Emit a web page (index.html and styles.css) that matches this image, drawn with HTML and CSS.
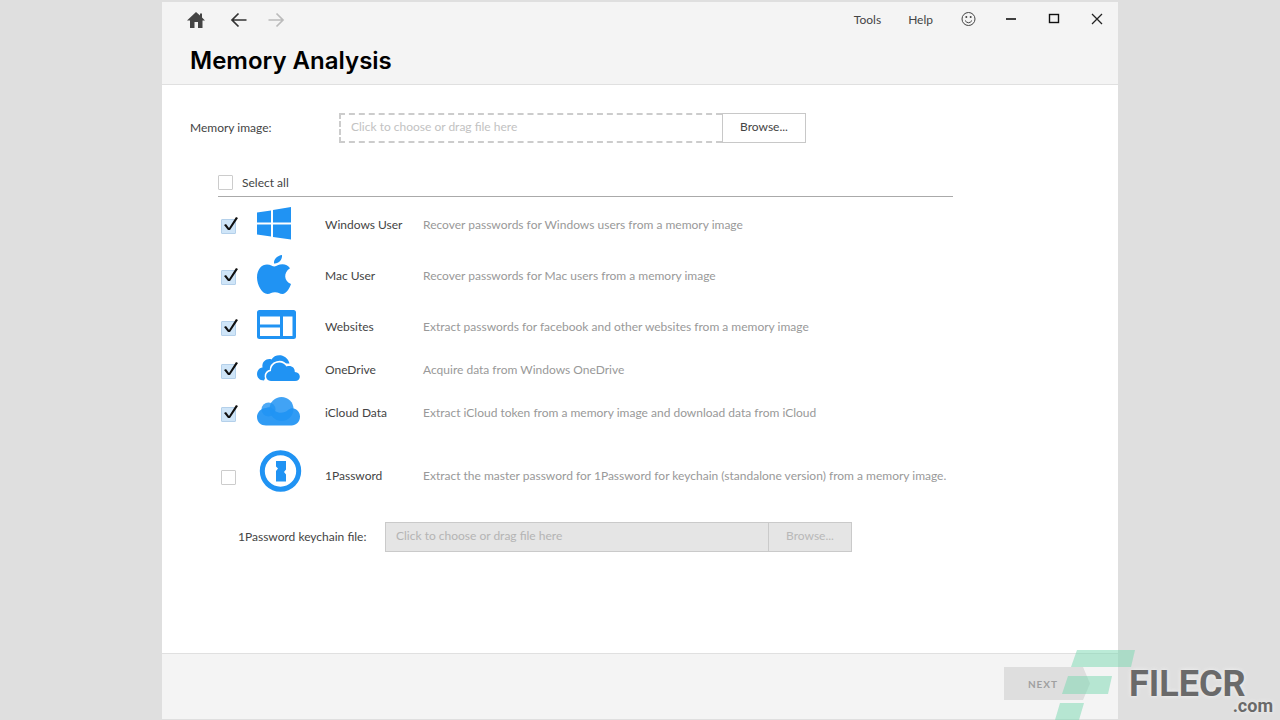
FILE: index.html
```html
<!DOCTYPE html>
<html lang="en">

<head>
    <meta charset="UTF-8">
    <meta name="viewport" content="width=device-width, initial-scale=1.0">
    <title>Memory Analysis</title>
    <link rel="stylesheet" href="styles.css">
</head>

<body>
    <div class="window">
        <header class="header">
            <div class="toolbar">
                <nav class="nav">
                    <button class="icon-btn home" aria-label="Home">
                        <svg width="18" height="18" viewBox="0 0 18 18"><path d="M9 1 L13 4.500 V2.500 H15 V6.500 L18 9.500 H15.500 V17 H11 V11 H7.500 V17 H3 V9.500 H0 Z" fill="#444"/></svg>
                    </button>
                    <button class="icon-btn" aria-label="Back">
                        <svg width="18" height="18" viewBox="0 0 18 18"><path d="M16.500 9 H2 M8.500 2.500 L2 9 L8.500 15.500" fill="none" stroke="#333" stroke-width="1.700"/></svg>
                    </button>
                    <button class="icon-btn" aria-label="Forward" disabled>
                        <svg width="18" height="18" viewBox="0 0 18 18"><path d="M1.500 9 H16 M9.500 2.500 L16 9 L9.500 15.500" fill="none" stroke="#bbb" stroke-width="1.700"/></svg>
                    </button>
                </nav>
                <div class="menu">
                    <button class="menu-btn">Tools</button>
                    <button class="menu-btn">Help</button>
                    <button class="icon-btn" aria-label="Feedback">
                        <svg width="16" height="16" viewBox="0 0 16 16" fill="none" stroke="#444" stroke-width="1"><circle cx="8.500" cy="7" r="6.500"/><path d="M5 8.500 Q8.500 13 12 8.500"/><circle cx="6.300" cy="5" r="1" fill="#444" stroke="none"/><circle cx="10.700" cy="5" r="1" fill="#444" stroke="none"/></svg>
                    </button>
                    <button class="icon-btn" aria-label="Minimize">
                        <svg width="16" height="16" viewBox="0 0 16 16"><path d="M3 7 H13" stroke="#111" stroke-width="1.600"/></svg>
                    </button>
                    <button class="icon-btn" aria-label="Maximize">
                        <svg width="16" height="16" viewBox="0 0 16 16"><rect x="3.500" y="2.500" width="9" height="8" fill="none" stroke="#111" stroke-width="1.400"/></svg>
                    </button>
                    <button class="icon-btn" aria-label="Close">
                        <svg width="16" height="16" viewBox="0 0 16 16"><path d="M3 2 L13 12 M13 2 L3 12" stroke="#222" stroke-width="1.300"/></svg>
                    </button>
                </div>
            </div>
            <h1>Memory Analysis</h1>
        </header>

        <main class="content">
            <div class="file-row">
                <label for="memory-image">Memory image:</label>
                <div class="file-picker">
                    <input type="text" id="memory-image" placeholder="Click to choose or drag file here">
                    <button>Browse...</button>
                </div>
            </div>

            <div class="options">
                <div class="select-all">
                    <input type="checkbox" class="check" id="select-all">
                    <label for="select-all">Select all</label>
                </div>

                <div class="option">
                    <input type="checkbox" class="check" id="windows" checked>
                    <svg class="option-icon" viewBox="0 0 44 44"><path d="M0 9.500 L14 7.500 V19.500 H0 Z M16 7 L34 4 V19.500 H16 Z M0 21.500 H14 V33.500 L0 31.500 Z M16 21.500 H34 V36.500 L16 34 Z"/></svg>
                    <label for="windows">Windows User</label>
                    <p>Recover passwords for Windows users from a memory image</p>
                </div>
                <div class="option spaced">
                    <input type="checkbox" class="check" id="mac" checked>
                    <svg class="option-icon" viewBox="0 0 44 44"><path d="M25 1 C25.500 6 21.500 10 17 9.500 C16.500 5 20.500 1.500 25 1 Z M17.500 12.500 C19.500 12.500 21.500 10.300 25.500 10.300 C28.500 10.300 31.300 11.800 33 14.300 C26 18.500 27 27.500 34 30 C32.500 34.500 29 40 25.500 40 C22.500 40 21.500 38.300 18 38.300 C14.500 38.300 13.500 40 10.500 40 C5 40 0 31 0 23.500 C0 15 5 10.500 10 10.500 C13.500 10.500 15.500 12.500 17.500 12.500 Z"/></svg>
                    <label for="mac">Mac User</label>
                    <p>Recover passwords for Mac users from a memory image</p>
                </div>
                <div class="option spaced">
                    <input type="checkbox" class="check" id="websites" checked>
                    <svg class="option-icon" viewBox="0 0 44 44"><path fill-rule="evenodd" d="M2.500 5 H36.500 Q39 5 39 7.500 V31.500 Q39 34 36.500 34 H2.500 Q0 34 0 31.500 V7.500 Q0 5 2.500 5 Z M3 11.500 V19.500 H23 V11.500 Z M26 11.500 V31 H35.500 V11.500 Z M3 22.500 V31 H23 V22.500 Z"/></svg>
                    <label for="websites">Websites</label>
                    <p>Extract passwords for facebook and other websites from a memory image</p>
                </div>
                <div class="option">
                    <input type="checkbox" class="check" id="onedrive" checked>
                    <svg class="option-icon" viewBox="0 0 44 44"><path d="M7 32.500 C-2 32.500 -2 20.500 5.500 19.500 C4.500 13 10.500 10 14.500 11.500 C18 5 30 5.500 32.500 15.500 H26 L10 26 Z"/><path d="M14 33 C7.500 33 7.500 24 14 23 C14 14 25 11.500 29.500 18.500 C34 17 38 19.500 37.800 24 C44.500 24.500 44.500 33 38 33 Z" stroke="#fff" stroke-width="3" paint-order="stroke"/></svg>
                    <label for="onedrive">OneDrive</label>
                    <p>Acquire data from Windows OneDrive</p>
                </div>
                <div class="option">
                    <input type="checkbox" class="check" id="icloud" checked>
                    <svg class="option-icon" viewBox="0 0 44 44"><circle cx="24.500" cy="18" r="12" opacity=".85"/><circle cx="11.500" cy="18.500" r="7" opacity=".8"/><path d="M9 17 C12.500 15 16.500 17.500 18 20 C22 23 28 22 31 19 C36 14.500 43 19 43 25.500 C43 31 39 34.500 34.500 34.500 H9 C4 34.500 0 31 0 26 C0 21.500 4 17 9 17 Z" opacity=".93"/></svg>
                    <label for="icloud">iCloud Data</label>
                    <p>Extract iCloud token from a memory image and download data from iCloud</p>
                </div>
                <div class="option onepassword">
                    <input type="checkbox" class="check" id="onepassword">
                    <svg class="option-icon" viewBox="0 0 44 44"><circle cx="23.500" cy="17" r="18.200" fill="none" stroke="#2093f3" stroke-width="5"/><path d="M19 7 H29 V15.500 L27 18 L29 20.500 V27.500 H19 V17 L21 14.500 L19 12.500 Z"/></svg>
                    <label for="onepassword">1Password</label>
                    <p>Extract the master password for 1Password for keychain (standalone version) from a memory image.</p>
                </div>
            </div>

            <div class="file-row keychain">
                <label for="keychain">1Password keychain file:</label>
                <div class="file-picker">
                    <input type="text" id="keychain" placeholder="Click to choose or drag file here" disabled>
                    <button disabled>Browse...</button>
                </div>
            </div>
        </main>

        <footer class="footer">
            <button class="next" disabled>NEXT</button>
        </footer>
    </div>

    <div class="watermark">
        <svg width="80" height="70" viewBox="0 0 80 70"><path d="M22 0 H80 L76 17 H16 Z M13 26 H57 L53 44 H7 Z M5 53 H29 L24 70 H0 Z"/></svg>
        <div class="brand">FILECR<span>.com</span></div>
    </div>
</body>

</html>
```

FILE: styles.css
```css
* {
    box-sizing: border-box;
}

body {
    margin: 0;
    height: 100vh;
    padding: 2px 162px 1px;
    background-color: #dfdfdf;
    color: #444;
    font-family: Lato, sans-serif;
    font-size: 12px;
    line-height: 16px;
}

button,
input {
    margin: 0;
    font: inherit;
    color: inherit;
}

p {
    margin: 0;
}

.window {
    display: flex;
    flex-direction: column;
    height: 100%;
    background: #fff;
}

.header {
    padding: 9px 13px 7px 24px;
    background: #f4f4f4;
    border-bottom: 1px solid #e0e0e0;
}

.toolbar,
.nav,
.menu {
    display: flex;
    align-items: center;
}

.toolbar {
    justify-content: space-between;
}

.nav {
    gap: 19px;
}

.menu {
    gap: 27px;
}

.icon-btn,
.menu-btn {
    display: flex;
    padding: 0;
    border: none;
    background: none;
}

.home {
    padding: 0 6px 0 1px;
}

.header h1 {
    margin: 16px 0 0 4px;
    color: #000;
    font-family: Inter, sans-serif;
    font-size: 24px;
    line-height: 32px;
    font-weight: 600;
}

.content {
    flex: 1;
    padding: 28px 28px 0;
}

.file-row {
    display: flex;
    align-items: center;
}

.file-row label {
    width: 149px;
}

.file-picker {
    display: flex;
    width: 467px;
    height: 30px;
}

.file-picker input {
    flex: 1;
    min-width: 0;
    padding: 0 10px 2px;
    border: 2px dashed #ccc;
    border-right: none;
    background: #fff;
}

.file-picker input::placeholder {
    color: #c2c2c2;
}

.file-picker button {
    width: 84px;
    padding: 0 0 2px;
    border: 1px solid #c8c8c8;
    background: #fff;
}

.file-picker input:disabled,
.file-picker button:disabled {
    border: 1px solid #cacaca;
    background: #e5e5e5;
    color: #b8b8b8;
}

.file-picker input:disabled {
    border-right: none;
}

.file-picker input:disabled::placeholder {
    color: #b4b4b4;
}

.options {
    width: 735px;
    margin: 32px 0 0 28px;
}

.select-all {
    display: flex;
    align-items: center;
    gap: 9px;
    height: 22px;
    margin-bottom: 6px;
    padding-bottom: 6px;
    border-bottom: 1px solid #aaa;
}

.check {
    appearance: none;
    position: relative;
    width: 15px;
    height: 15px;
    border: 1px solid #ccc;
    border-radius: 1px;
    background: #fff;
}

.check:checked {
    border-color: #b4d0ea;
    background: #cfe5f8;
}

/* tick sticks out of the box on the top right */
.check:checked::before {
    content: "";
    position: absolute;
    left: 2px;
    top: -3px;
    width: 14px;
    height: 14px;
    background: #111;
    clip-path: polygon(0 8px, 2px 7px, 5px 11px, 12px 0, 14px 1px, 6px 13px, 4px 13px);
}

.option {
    display: grid;
    grid-template-columns: 36px 68px 98px 1fr;
    align-items: center;
    height: 43px;
    padding-left: 3px;
}

.option .check {
    margin-top: 3px;
}

.option p {
    color: #999;
    white-space: nowrap;
}

.option-icon {
    width: 44px;
    height: 44px;
    overflow: visible;
    fill: #2093f3;
}

.spaced {
    margin-top: 8px;
}

.onepassword {
    margin-top: 20px;
}

.keychain {
    margin: 25px 0 0 48px;
}

.keychain label {
    width: 147px;
}

.footer {
    display: flex;
    justify-content: flex-end;
    height: 66px;
    padding: 13px 28px 0;
    background: #f4f4f4;
    border-top: 1px solid #e0e0e0;
}

.next {
    width: 86px;
    height: 33px;
    padding: 0 8px 0 0;
    border: none;
    background: #dedede;
    color: #a0a0a0;
    font-size: 10px;
    font-weight: 700;
    letter-spacing: 1px;
    clip-path: polygon(0 0, 79px 0, 100% 50%, 79px 100%, 0 100%);
}

.watermark {
    position: absolute;
    right: 7px;
    bottom: 0;
    display: flex;
    width: 218px;
    height: 70px;
}

.watermark svg {
    flex: none;
    fill: rgba(120, 215, 175, 0.5);
}

.brand {
    margin: 14px 0 0 -6px;
    color: #6a6a6a;
    font-family: Roboto, sans-serif;
    font-size: 36px;
    line-height: 40px;
    font-weight: 700;
    text-shadow: 0 0 4px #f4f4f4;
}

.brand span {
    display: block;
    width: 144px;
    margin-top: -8px;
    font-size: 18px;
    line-height: 20px;
    text-align: right;
}
```
